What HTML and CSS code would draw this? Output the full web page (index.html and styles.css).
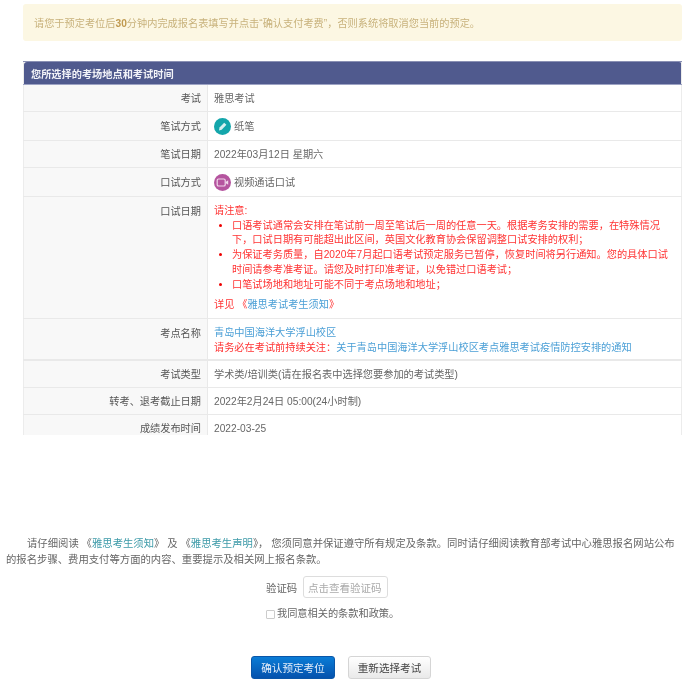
FILE: index.html
```html
<!DOCTYPE html>
<html lang="zh-CN">
<head>
<meta charset="utf-8">
<title>确认预定考位</title>
<link rel="stylesheet" href="styles.css">
</head>
<body>
<div class="page">
  <div class="alert">请您于预定考位后<b>30</b>分钟内完成报名表填写并点击“确认支付考费”，否则系统将取消您当前的预定。</div>
  <div class="scroll">
    <table class="info">
      <colgroup><col class="col-l"><col class="col-v"></colgroup>
      <thead><tr><th colspan="2">您所选择的考场地点和考试时间</th></tr></thead>
      <tbody>
        <tr><td class="lbl">考试</td><td class="val">雅思考试</td></tr>
        <tr><td class="lbl">笔试方式</td><td class="val"><span class="mode">
          <svg class="ico" viewBox="0 0 17 17"><circle cx="8.5" cy="8.5" r="8.5" fill="#14a6ab"/><path d="M5 12.4l.5-2.8 4.7-4.9 2.2 2.1-4.7 4.9z" fill="#d8f0f0"/></svg>纸笔</span></td></tr>
        <tr><td class="lbl">笔试日期</td><td class="val">2022年03月12日 星期六</td></tr>
        <tr><td class="lbl">口试方式</td><td class="val"><span class="mode">
          <svg class="ico" viewBox="0 0 17 17"><circle cx="8.5" cy="8.5" r="8.5" fill="#b5559f"/><rect x="3.2" y="5" width="8" height="7" rx="1.3" fill="none" stroke="#f0d8ea" stroke-width="1.2"/><path d="M11.6 8l2.6-1.8v4.6l-2.6-1.8z" fill="#f0d8ea"/></svg>视频通话口试</span></td></tr>
        <tr><td class="lbl top">口试日期</td><td class="val notice">
          <div>请注意:</div>
          <ul class="rules">
            <li>口语考试通常会安排在笔试前一周至笔试后一周的任意一天。根据考务安排的需要，在特殊情况下，口试日期有可能超出此区间，英国文化教育协会保留调整口试安排的权利；</li>
            <li>为保证考务质量，自2020年7月起口语考试预定服务已暂停，恢复时间将另行通知。您的具体口试时间请参考准考证。请您及时打印准考证，以免错过口语考试；</li>
            <li>口笔试场地和地址可能不同于考点场地和地址；</li>
          </ul>
          <div>详见 《<a class="link">雅思考试考生须知</a>》</div>
        </td></tr>
        <tr class="thick"><td class="lbl top">考点名称</td><td class="val place">
          <div><a class="link">青岛中国海洋大学浮山校区</a></div>
          <div class="red">请务必在考试前持续关注：<a class="link">关于青岛中国海洋大学浮山校区考点雅思考试疫情防控安排的通知</a></div>
        </td></tr>
        <tr><td class="lbl">考试类型</td><td class="val">学术类/培训类(请在报名表中选择您要参加的考试类型)</td></tr>
        <tr><td class="lbl">转考、退考截止日期</td><td class="val">2022年2月24日 05:00(24小时制)</td></tr>
        <tr><td class="lbl">成绩发布时间</td><td class="val">2022-03-25</td></tr>
      </tbody>
    </table>
  </div>
  <p class="terms">请仔细阅读 《<a class="link2">雅思考生须知</a>》 及 《<a class="link2">雅思考生声明</a>》， 您须同意并保证遵守所有规定及条款。同时请仔细阅读教育部考试中心雅思报名网站公布<br>的报名步骤、费用支付等方面的内容、重要提示及相关网上报名条款。</p>
  <div class="captcha"><label class="cap-label">验证码</label><input class="cap-input" type="text" placeholder="点击查看验证码"></div>
  <div class="agree"><span class="box"></span>我同意相关的条款和政策。</div>
  <div class="actions">
    <button class="btn primary">确认预定考位</button>
    <button class="btn">重新选择考试</button>
  </div>
</div>
</body>
</html>
```
FILE: styles.css
```css
* { box-sizing: border-box; }
html, body { margin: 0; padding: 0; background: #fff; }
body { font-family: "Liberation Sans", "Noto Sans CJK SC", sans-serif; font-size: 10.2px; color: #666; overflow: hidden; }
.page { height: 693px; filter: blur(0.45px); padding-top: 4px; }
.alert { margin: 0 17px 0 23px; height: 37px; padding-left: 11px; line-height: 40px; background: #fcf7e3; border-radius: 3px; color: #c8b27c; }
.alert b { color: #c09a50; }
.scroll { margin: 20px 17px 0 23px; height: 374px; overflow: hidden; }
.info { width: 659px; border-collapse: collapse; table-layout: fixed; border-right: 1px solid #ececec; border-left: 1px solid #ececec; }
.col-l { width: 184px; }
.info th { height: 23px; padding: 0 0 0 7px; text-align: left; font-weight: 700; color: #f2f3f8; background: #505a8e; border-top: 1px solid #8a90b4; border-bottom: 1px solid #9da3c4; border-radius: 3px 3px 0 0; }
.info td { padding: 6px 6px 5px; line-height: 15px; border-bottom: 1px solid #e9e9e9; vertical-align: middle; }
.lbl { text-align: right; background: #f8f8f8; color: #555; border-right: 1px solid #e9e9e9; }
.info .top { vertical-align: top; padding-top: 7px; }
.val { background: #fff; }
.mode { display: flex; align-items: center; gap: 3px; }
.ico { width: 17px; height: 17px; flex: none; }
.info .notice { padding-top: 7px; padding-bottom: 5px; color: #f33; line-height: 14.7px; }
.rules { margin: 0 0 6px; padding: 0 5px 0 18px; color: #f33; }
.rules li::marker { color: #e00; }
.link { color: #4a9fd6; }
.red { color: #f33; }
.info .place { padding-top: 6px; padding-bottom: 4px; }
.thick td { border-bottom-width: 2px; }
.terms { margin: 101px 0 0 6px; font-size: 10.35px; line-height: 16px; text-indent: 21px; color: #666; white-space: nowrap; }
.link2 { color: #3d9aa8; }
.captcha { display: flex; align-items: center; margin: 8px 0 0 266px; }
.cap-label { width: 37px; color: #666; font-size: 10.4px; }
.cap-input { width: 85px; height: 22px; padding: 0 4px; border: 1px solid #ddd; border-radius: 3px; font: 10.5px "Noto Sans CJK SC", sans-serif; outline: none; }
.cap-input::placeholder { color: #aaa; }
.agree { display: flex; align-items: center; margin: 8px 0 0 266px; line-height: 16px; color: #666; }
.box { width: 9px; height: 9px; margin-right: 2px; border: 1px solid #ccc; border-radius: 1px; }
.actions { display: flex; gap: 13px; margin: 34px 0 0 251px; }
.btn { width: 83px; height: 23px; padding: 0; border: 1px solid #d5d5d5; border-radius: 3px; background: linear-gradient(#fff, #e9e9e9); color: #444; font: 10.6px "Noto Sans CJK SC", sans-serif; }
.primary { width: 84px; border-color: #0a56a8; background: linear-gradient(#0a7cd6, #0552ad); color: #e4eefa; }
```
